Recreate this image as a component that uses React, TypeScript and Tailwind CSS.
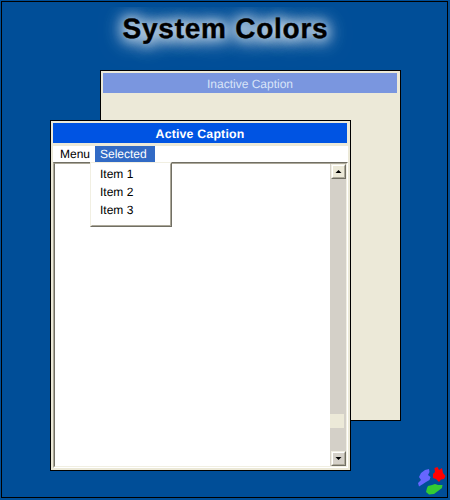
const sans = "font-['Liberation_Sans',Arial,sans-serif] [text-rendering:geometricPrecision]";

function Caption({ text, active }: { text: string; active?: boolean }) {
  return (
    <div
      className={
        "flex h-5 w-[294px] shrink-0 items-center justify-center pt-[2px] leading-5 " +
        (active
          ? "bg-[#0054e3] text-[12.3px] font-bold tracking-[0.2px] text-white"
          : "bg-[#7a96df] text-xs leading-5 text-[#d8e4f8]")
      }
    >
      {text}
    </div>
  );
}

function ScrollButton({ down }: { down?: boolean }) {
  return (
    <div
      className={
        "ml-px flex h-[15px] w-[15px] shrink-0 items-center justify-center border border-t-[#f1efe2] border-l-[#f1efe2] border-r-[#716f64] border-b-[#716f64] " +
        (down ? "bg-[#d4d0c8]" : "bg-[#ece9d8]")
      }
    >
      <div className="flex h-[13px] w-[13px] items-start justify-center border border-t-white border-l-white border-r-[#aca899] border-b-[#aca899] pt-1">
        <svg width="7" height="3" viewBox="0 0 7 3" className={down ? "rotate-180" : ""}>
          <path d="M3.5 0 6.5 3H.5Z" fill="#000" />
        </svg>
      </div>
    </div>
  );
}

function Logo() {
  return (
    <svg width="30" height="31" viewBox="0 0 30 31" className="absolute left-[417px] top-[465px]">
      <path d="M8 5 12 4 12.5 7 11 10 13.5 12 12.5 15 9 17 6 19 2 21.5 1 18 4 15 2 12 4 8Z" fill="#6666ff" />
      <path d="M17.5 3 20.5 2 22 5 25 3 26 8 28.5 11 27 14 24 14.5 22 17 19 14 16 13 16 9 18 7Z" fill="#f00" />
      <path d="M11 21 15 20 18 19 21 20 25.5 20 25 23 21 26 17 29 12 29.5 9 27 10 23Z" fill="#33cc33" />
    </svg>
  );
}

export default function App() {
  return (
    <div className={"relative h-[500px] w-[450px] overflow-hidden bg-[#004e98] p-px " + sans}>
      <div className="h-[497px] w-[447px] border border-black pt-[5px]">
        <h1 className="overflow-hidden pb-6 pl-[2px] pt-[4px] text-center text-[28px] font-bold leading-[36px] tracking-[0.75px] text-black [-webkit-text-stroke:0.4px_#000] [text-shadow:0_0_12px_#fffc,0_1px_16px_#fffc,0_1px_20px_#fffc,0_2px_24px_#fff9]">
          System Colors
        </h1>
      </div>

      <div className="absolute left-[100px] top-[70px] h-[351px] w-[301px] border border-black bg-[#ece9d8] p-[2px]">
        <Caption text="Inactive Caption" />
      </div>

      <div className="absolute left-[50px] top-[120px] flex h-[351px] w-[301px] flex-col border border-black bg-[#ece9d8] pl-[2px] pt-[2px]">
        <Caption text="Active Caption" active />
        <div className="mt-[3px] flex h-4 w-[295px] shrink-0 bg-white text-xs leading-4 text-black">
          <span className="w-[42px] pl-[7px]">Menu</span>
          <span className="w-[60px] bg-[#316ac5] pl-[5px] text-white">Selected</span>
        </div>
        <div className="flex h-[306px] w-[295px] shrink-0 border border-b-white border-l-[#aca899] border-r-white border-t-[#716f64]">
          <div className="flex grow border border-b-[#f1efe2] border-l-[#716f64] border-r-[#f1efe2] border-t-[#aca899]">
            <div className="grow bg-white" />
            <div className="flex w-4 flex-col bg-[#d4d0c8]">
              <ScrollButton />
              <div className="mb-[23px] mt-auto h-[14px] w-[14px] bg-[#ece9d8]" />
              <ScrollButton down />
            </div>
          </div>
        </div>
      </div>

      <div className="absolute left-[90px] top-[162px] h-[65px] w-[82px] border border-b-[#716f64] border-l-[#f1efe2] border-r-[#716f64] border-t-[#f1efe2] bg-white">
        <div className="h-[63px] w-[80px] border border-b-[#aca899] border-l-white border-r-[#aca899] border-t-white pl-2 pt-px text-xs leading-[18px] text-black">
          <div>Item 1</div>
          <div>Item 2</div>
          <div>Item 3</div>
        </div>
      </div>

      <Logo />
    </div>
  );
}
